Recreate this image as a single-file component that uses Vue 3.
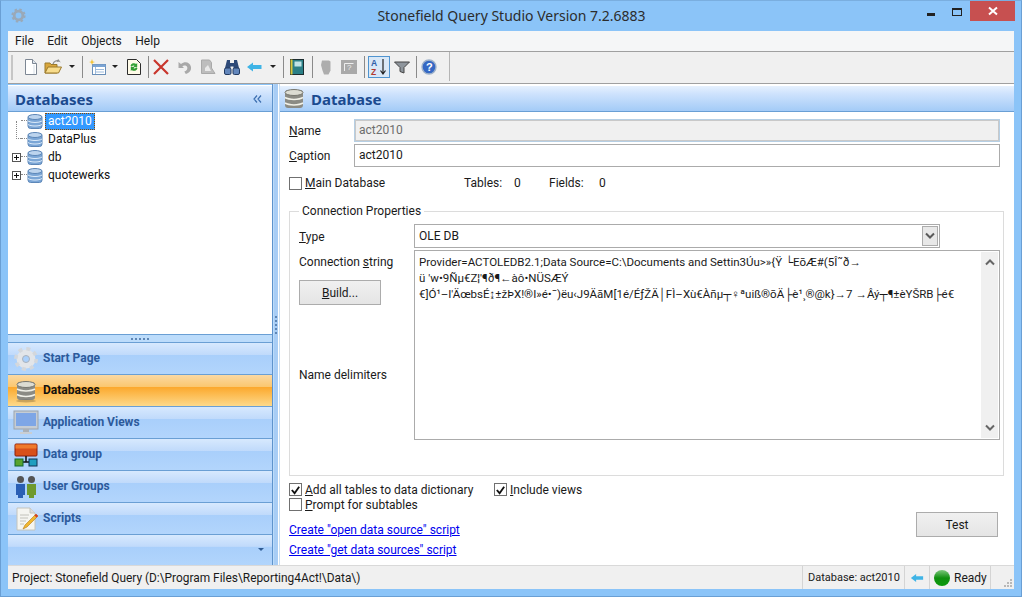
<template>
  <div class="window">
    <div class="titlebar">
      <svg class="app-icon" viewBox="0 0 16 16"><circle cx="8" cy="8" r="4.6" fill="none" stroke="#9aa9b8" stroke-width="3" /><circle cx="8" cy="8" r="6.6" fill="none" stroke="#9aa9b8" stroke-width="2" stroke-dasharray="2.6 2.6" /></svg>
      <span class="title">Stonefield Query Studio Version 7.2.6883</span>
      <div class="winbtns">
        <span class="min"></span>
        <span class="max"></span>
        <span class="close"><svg viewBox="0 0 10 10" width="10" height="10"><path d="M1 1.500l8 7M9 1.500l-8 7" stroke="#fff" stroke-width="2" /></svg></span>
      </div>
    </div>

    <div class="menubar">
      <span v-for="m in menus" :key="m">{{ m }}</span>
    </div>

    <div class="toolbar">
      <span class="grip"></span>
      <!-- new -->
      <svg class="tb ml-9" viewBox="0 0 16 16"><path d="M2.500 .5h7l4 4v11h-11z" fill="#fff" stroke="#7d8794" /><path d="M9.500 .5v4h4" fill="#dfe6ee" stroke="#7d8794" /><path d="M11 15V6" stroke="#d5dde6" /></svg>
      <!-- open -->
      <svg class="tb wide ml-5" viewBox="0 0 18 16"><path d="M1 4h5l1 1.500h6V14H1z" fill="#d9a63c" stroke="#9b7a2c" /><path d="M1 14l3-6h13.500l-3 6z" fill="#f8dc8c" stroke="#9b7a2c" /><path d="M9 5c1-3 4-4 6-3l-1-1.500M15 2l-2 .5" fill="none" stroke="#8c8c8c" stroke-width="1.200" /></svg>
      <span class="caret ml-7"></span>
      <span class="sep ml-7"></span>
      <!-- new view -->
      <svg class="tb wide ml-5" viewBox="0 0 18 16"><rect x="4.500" y="5.500" width="13" height="10" fill="#fff" stroke="#6a8fb8" /><rect x="4.500" y="5.500" width="13" height="2.500" fill="#7aa4d4" /><path d="M8 10.500h8M8 13h8M7.500 8v7" stroke="#9dbbdc" /><path d="M4 0l.8 2.400L7 3l-2.200.7L4 6l-.8-2.300L1 3l2.200-.6z" fill="#f2c230" /></svg>
      <span class="caret ml-6"></span>
      <!-- refresh doc -->
      <svg class="tb ml-8" viewBox="0 0 16 16"><path d="M1.500 .5h9l4 4v11h-13z" fill="#fffbe8" stroke="#2c2c2c" /><path d="M4.500 7a3.500 3.500 0 0 1 5.700-2l1-1v4H7.300l1.200-1.200A1.900 1.900 0 0 0 6 7.800z" fill="#36a336" /><path d="M11.500 9a3.500 3.500 0 0 1-5.700 2l-1 1V8h3.900L7.500 9.200a1.900 1.900 0 0 0 2.500-1z" fill="#2f9b2f" /></svg>
      <span class="sep ml-6"></span>
      <!-- delete -->
      <svg class="tb ml-4" viewBox="0 0 16 16"><path d="M1 1l14 14M15 1L1 15" stroke="#c8352c" stroke-width="2.200" /></svg>
      <!-- undo, disabled -->
      <svg class="tb ml-8" viewBox="0 0 16 16"><path d="M1.500 3v6h5.500L5.300 7.200C7 6 10 6.500 10.300 8.500c.3 2-1 3.500-3 4l1.500 2.500c4-1 6-4 5-7.700C13 3.500 8 1.500 4 5z" fill="#a9a9a9" /></svg>
      <!-- find text, disabled -->
      <svg class="tb ml-7" viewBox="0 0 16 16"><path d="M1.500 1h8l2 2.500V9l3.500 5.500H1.500z" fill="#bdbdbd" stroke="#a9a9a9" /><path d="M5 9l3-3 3 6H5z" fill="#e9e9e9" /></svg>
      <!-- binoculars -->
      <svg class="tb ml-8" viewBox="0 0 16 16"><path d="M3 1h3v3h4V1h3l2.500 10h-6V7.500h-3V11H.5z" fill="#2e4a78" /><rect x=".5" y="9" width="6.500" height="6.500" rx="1.500" fill="#6286bb" stroke="#223a60" /><rect x="9" y="9" width="6.500" height="6.500" rx="1.500" fill="#6286bb" stroke="#223a60" /></svg>
      <!-- back -->
      <svg class="tb ml-6" viewBox="0 0 16 16"><path d="M1 8l6-4.500V6h8.500v4H7v2.500z" fill="#3fb4e6" /></svg>
      <span class="caret ml-8"></span>
      <span class="sep ml-7"></span>
      <!-- save book -->
      <svg class="tb ml-5" viewBox="0 0 16 16"><rect x="1.500" y=".5" width="13" height="15" fill="#2a7f86" stroke="#1c2c30" /><rect x="1.500" y=".5" width="2" height="15" fill="#d8c83c" /><rect x="5.500" y="2.500" width="7" height="5" fill="#bfe3e6" /></svg>
      <span class="sep ml-7"></span>
      <!-- hand, disabled -->
      <svg class="tb ml-5" viewBox="0 0 16 16"><path d="M4 1.500h7l1.500 1v9l-2 4H6l-1.500-4L3 6z" fill="#adadad" /></svg>
      <!-- query, disabled -->
      <svg class="tb ml-7" viewBox="0 0 16 16"><rect x="0" y="1" width="16" height="14" fill="#a9a9a9" /><path d="M3.500 12V4.500h9" fill="none" stroke="#eee" /><text x="6" y="11" font-size="8" fill="#eee" font-family="Liberation Sans, sans-serif">?</text></svg>
      <span class="sep ml-7"></span>
      <!-- sort toggle -->
      <span class="toggled ml-3">
        <svg viewBox="0 0 18 18" width="18" height="18"><text x="1" y="8" font-size="8.500" font-weight="700" fill="#2f5fa8" font-family="Liberation Sans, sans-serif">A</text><text x="1" y="16.500" font-size="8.500" font-weight="700" fill="#b23a30" font-family="Liberation Sans, sans-serif">Z</text><path d="M13 1v14M10.500 12.500L13 16l2.500-3.500" fill="none" stroke="#222" stroke-width="1.200" /></svg>
      </span>
      <!-- filter -->
      <svg class="tb ml-4" viewBox="0 0 16 16"><path d="M.5 3h15L10 8.500V14l-4-1.500v-4z" fill="#8e959c" stroke="#444" /></svg>
      <span class="sep ml-6"></span>
      <!-- help -->
      <svg class="tb ml-4" viewBox="0 0 16 16"><circle cx="8" cy="8" r="7" fill="#3568c4" stroke="#9fb2c9" stroke-width="1.400" /><text x="5" y="12" font-size="11" font-weight="700" fill="#fff" font-family="Liberation Sans, sans-serif">?</text></svg>
      <span class="sep-end"></span>
    </div>

    <div class="main">
      <div class="left">
        <div class="panel-head">
          <span class="panel-title">Databases</span>
          <svg class="collapse" viewBox="0 0 9 8" width="9" height="8"><path d="M4 .5L1 4l3 3.500M8 .5L5 4l3 3.500" fill="none" stroke="#3d6fb0" stroke-width="1.200" /></svg>
        </div>
        <div class="tree">
          <div v-for="(t, i) in treeItems" :key="t.name" class="tree-row">
            <span class="expander" :class="{ hidden: !t.kids }"><i></i><b></b></span>
            <span class="dots" :class="{ first: i === 0 }"></span>
            <svg class="db-small" viewBox="0 0 16 16">
              <rect x="1" y="2" width="14" height="13" rx="2.500" fill="#7ba6d6" stroke="#5d87b8" />
              <ellipse cx="8" cy="3.500" rx="7" ry="2.500" fill="#bcd4ee" stroke="#5d87b8" />
              <path d="M1 7.500c3 2 11 2 14 0M1 11c3 2 11 2 14 0" fill="none" stroke="#dcebfa" />
            </svg>
            <span class="tree-label" :class="{ selected: i === 0 }">{{ t.name }}</span>
          </div>
        </div>
        <div class="hsplit"><span class="dotgrip"></span></div>
        <div
          v-for="n in navItems"
          :key="n.name"
          class="nav-item"
          :class="{ active: n.name === 'Databases' }"
        >
          <span class="nav-icon">
            <svg v-if="n.icon === 'gear'" viewBox="0 0 24 24" width="24" height="24"><circle cx="12" cy="12" r="6.500" fill="none" stroke="#e2e5e9" stroke-width="6" /><circle cx="12" cy="12" r="10.200" fill="none" stroke="#d3d7dc" stroke-width="3.600" stroke-dasharray="4 4.010" /><circle cx="12" cy="12" r="3.500" fill="none" stroke="#aab2bc" /></svg>
            <svg v-else-if="n.icon === 'db'" viewBox="0 0 24 24" width="24" height="24"><rect x="3" y="3" width="18" height="18" rx="3" fill="#8b8b84" /><ellipse cx="12" cy="5.500" rx="9" ry="3" fill="#dcdcd2" stroke="#77776f" /><path d="M3 10c4 2.500 14 2.500 18 0M3 15.500c4 2.500 14 2.500 18 0" fill="none" stroke="#f1f1e8" stroke-width="1.500" /><ellipse cx="12" cy="22" rx="10" ry="1.500" fill="#00000033" /></svg>
            <svg v-else-if="n.icon === 'monitor'" viewBox="0 0 26 26" width="26" height="26"><rect x="1" y="1" width="24" height="18" fill="#c5ccd4" stroke="#9aa3ad" /><rect x="3" y="3" width="20" height="13" fill="#7ea6e6" /><rect x="10" y="19" width="6" height="3" fill="#aab1b8" /><rect x="7" y="22" width="12" height="2" fill="#c9ced3" /></svg>
            <svg v-else-if="n.icon === 'group'" viewBox="0 0 24 24" width="24" height="24"><rect x="1" y="1" width="22" height="12" rx="1" fill="#d8501a" stroke="#8a1e0c" /><rect x="1.500" y="1.500" width="21" height="4" fill="#ef7a2c" /><path d="M12 13v6M9 19h6" stroke="#111" stroke-width="1.500" /><rect x="1" y="16" width="8" height="7" fill="#58a32f" stroke="#163" /><rect x="15" y="16" width="8" height="7" fill="#1f9fc0" stroke="#135" /></svg>
            <svg v-else-if="n.icon === 'users'" viewBox="0 0 24 24" width="24" height="24"><circle cx="6.500" cy="4.500" r="3.500" fill="#555" /><path d="M2 9h9v11H9v3H4v-3H2z" fill="#2a5fb5" /><circle cx="17.500" cy="4.500" r="3.500" fill="#555" /><path d="M13 9h9v11h-2v3h-5v-3h-2z" fill="#6f9a2e" /></svg>
            <svg v-else viewBox="0 0 24 24" width="24" height="24"><path d="M3 1h13l5 5v17H3z" fill="#f5f5f0" stroke="#c4c4bc" /><path d="M16 1v5h5" fill="#ddd" stroke="#c4c4bc" /><path d="M6 8h9M6 11h8M6 14h6M6 17h4" stroke="#c2c2bb" /><path d="M22 7l2 2-11 11-4 2 2-4z" fill="#f0b72f" stroke="#b77a15" stroke-width=".6" /><path d="M22 7l2 2-1.500 1.500-2-2z" fill="#d63b2c" /></svg>
          </span>
          <span class="nav-label">{{ n.name }}</span>
        </div>
        <div class="nav-foot"><span class="foot-caret"></span></div>
      </div>

      <div class="vsplit"><span class="vgrip"></span></div>

      <div class="right">
        <div class="panel-head">
          <svg class="head-db" viewBox="0 0 20 22" width="20" height="22"><rect x="1" y="2" width="18" height="18" rx="3" fill="#8b8b84" /><ellipse cx="10" cy="4.500" rx="9" ry="3" fill="#dcdcd2" stroke="#77776f" /><path d="M1 9.500c4 2.500 14 2.500 18 0M1 15c4 2.500 14 2.500 18 0" fill="none" stroke="#f1f1e8" stroke-width="1.500" /></svg>
          <span class="panel-title">Database</span>
        </div>

        <div class="form">
          <div class="field-row">
            <label><u>N</u>ame</label>
            <div class="input disabled">act2010</div>
          </div>
          <div class="field-row second">
            <label><u>C</u>aption</label>
            <div class="input">act2010</div>
          </div>

          <div class="main-row">
            <span class="check"></span>
            <span class="check-text main-text"><u>M</u>ain Database</span>
            <span class="count">Tables:</span><span class="num">0</span>
            <span class="count">Fields:</span><span class="num">0</span>
          </div>

          <fieldset class="group">
            <legend>Connection Properties</legend>
            <div class="group-body">
              <div class="labels">
                <div class="lbl-type"><u>T</u>ype</div>
                <div class="lbl-conn">Connection <u>s</u>tring</div>
                <div class="btn build"><span><u>B</u>uild...</span></div>
                <div class="lbl-delim">Name delimiters</div>
              </div>
              <div class="controls">
                <div class="select">
                  <span>OLE DB</span>
                  <span class="select-btn"><svg viewBox="0 0 10 8" width="10" height="8"><path d="M1 1.500l4 4 4-4" fill="none" stroke="#5a5a5a" stroke-width="2" /></svg></span>
                </div>
                <div class="textarea">
                  <div class="text">
                    <div>Provider=ACTOLEDB2.1;Data Source=C:\Documents and Settin3Úu&gt;»{Ÿ └EõÆ#(5Î˜ð→</div>
                    <div>ü 'w•9Ñµ€Z¦'¶ð¶←àô•NÜSÆÝ</div>
                    <div>€]Ó¹–I'ÄœbsÉ↨±žÞX!®I»é•¯)ëu‹J9ÄãM[1é/ÉƒŽÄ│FÌ–Xù€Àñµ┬♀ªuiß®õÄ├è¹¸®@k}→7 →Âý┬¶±èYŠRB├é€</div>
                  </div>
                  <div class="scroll">
                    <svg viewBox="0 0 10 8" width="10" height="8"><path d="M1 6.500l4-4 4 4" fill="none" stroke="#666" stroke-width="2" /></svg>
                    <svg viewBox="0 0 10 8" width="10" height="8"><path d="M1 1.500l4 4 4-4" fill="none" stroke="#666" stroke-width="2" /></svg>
                  </div>
                </div>
              </div>
            </div>
          </fieldset>

          <div class="bottom">
            <div class="options">
              <div class="opt-row">
                <span class="check"><svg viewBox="0 0 12 12" width="12" height="12"><path d="M2 6l3 3.500L10 2.500" fill="none" stroke="#111" stroke-width="2" /></svg></span>
                <span class="check-text add"><u>A</u>dd all tables to data dictionary</span>
                <span class="check"><svg viewBox="0 0 12 12" width="12" height="12"><path d="M2 6l3 3.500L10 2.500" fill="none" stroke="#111" stroke-width="2" /></svg></span>
                <span class="check-text"><u>I</u>nclude views</span>
              </div>
              <div class="opt-row">
                <span class="check"></span>
                <span class="check-text"><u>P</u>rompt for subtables</span>
              </div>
              <a class="link first">Create "open data source" script</a>
              <a class="link">Create "get data sources" script</a>
            </div>
            <div class="btn test"><span>Test</span></div>
          </div>
        </div>
      </div>
    </div>

    <div class="statusbar">
      <span class="st-project">Project: Stonefield Query (D:\Program Files\Reporting4Act!\Data\)</span>
      <span class="st-cell st-db">Database: act2010</span>
      <span class="st-cell st-arrow"><svg viewBox="0 0 16 16" width="14" height="14"><path d="M1 8l6-4.500V6h8v4H7v2.500z" fill="#3fb4e6" /></svg></span>
      <span class="st-cell st-ready"><span class="led"></span>Ready</span>
      <span class="st-grip"><svg viewBox="0 0 9 9" width="9" height="9"><path d="M6 0h2v2H6zM3 3h2v2H3zM6 3h2v2H6zM0 6h2v2H0zM3 6h2v2H3zM6 6h2v2H6z" fill="#b8b8b8" /></svg></span>
    </div>
  </div>
</template>

<script setup>
const menus = ['File', 'Edit', 'Objects', 'Help'];

const treeItems = [
  { name: 'act2010', kids: false },
  { name: 'DataPlus', kids: false },
  { name: 'db', kids: true },
  { name: 'quotewerks', kids: true },
];

const navItems = [
  { name: 'Start Page', icon: 'gear' },
  { name: 'Databases', icon: 'db' },
  { name: 'Application Views', icon: 'monitor' },
  { name: 'Data group', icon: 'group' },
  { name: 'User Groups', icon: 'users' },
  { name: 'Scripts', icon: 'script' },
];
</script>

<style>
html, body { margin: 0; padding: 0; overflow: hidden; }
</style>

<style scoped>
.window {
  width: 1022px;
  height: 597px;
  box-sizing: border-box;
  background: #8bc4f8;
  border: 1px solid #6a9fd4;
  border-top-color: #7aaedf;
  padding: 0 7px 7px;
  display: flex;
  flex-direction: column;
  font-family: Roboto, "Noto Sans", sans-serif;
  font-size: 12px;
  color: #1a1a1a;
}
.titlebar {
  height: 30px;
  flex: none;
  display: flex;
  align-items: flex-start;
}
.app-icon { width: 15px; height: 15px; margin: 7px 0 0 3px; flex: none; }
.title {
  flex: 1;
  text-align: center;
  font-family: "Noto Sans", sans-serif;
  font-size: 14px;
  line-height: 30px;
  color: #2c2c2c;
  padding-left: 70px;
}
.winbtns { display: flex; align-items: flex-start; flex: none; }
.min { width: 8px; height: 3px; background: #222; margin: 12px 17px 0 0; }
.max { width: 8px; height: 5px; border: 1px solid #222; border-top-width: 2px; margin: 7px 8px 0 0; }
.close {
  width: 45px;
  height: 20px;
  margin-right: -1px;
  background: #c75050;
  display: flex;
  align-items: center;
  justify-content: center;
}

.menubar {
  height: 21px;
  flex: none;
  box-sizing: border-box;
  background: #f5f6f7;
  display: flex;
  align-items: center;
  gap: 13.5px;
  padding-left: 7px;
  border-bottom: 1px solid #a0a0a0;
  line-height: 20px;
}
.toolbar {
  height: 32px;
  flex: none;
  box-sizing: border-box;
  background: #f0f0f0;
  border-bottom: 1px solid #a0a0a0;
  display: flex;
  align-items: center;
  padding: 0 0 2px 3px;
}
.grip { width: 1px; height: 25px; border-left: 2px solid #c6c6c6; margin-top: 2px; flex: none; }
.tb { width: 16px; height: 16px; flex: none; }
.tb.wide { width: 18px; }
.ml-3 { margin-left: 3px; }
.ml-4 { margin-left: 4px; }
.ml-5 { margin-left: 5px; }
.ml-6 { margin-left: 6px; }
.ml-7 { margin-left: 7px; }
.ml-8 { margin-left: 8px; }
.ml-9 { margin-left: 9px; }
.caret {
  width: 0;
  height: 0;
  border-left: 3px solid transparent;
  border-right: 3px solid transparent;
  border-top: 3px solid #222;
  flex: none;
}
.sep { width: 1px; height: 22px; background: #8a8a8a; flex: none; }
.sep-end { width: 1px; height: 100%; background: #b5b5b5; margin-left: 12px; flex: none; }
.toggled {
  width: 22px;
  height: 22px;
  box-sizing: border-box;
  border: 1px solid #4f94d0;
  background: #d9e8f7;
  display: flex;
  align-items: center;
  justify-content: center;
  flex: none;
}

.main { flex: 1; display: flex; min-height: 0; }
.left { width: 264px; flex: none; display: flex; flex-direction: column; }
.vsplit {
  width: 8px;
  flex: none;
  background: linear-gradient(90deg, #5e93cc 0 1px, #bcdcfa 1px 2px, #a8cdf5 2px 6px, #fff 6px 7px, #c9dff4 7px);
  display: flex;
  align-items: center;
  justify-content: center;
}
.vgrip { width: 2px; height: 18px; background: repeating-linear-gradient(#5e86b5 0 2px, transparent 2px 4px); }
.right { flex: 1; min-width: 0; background: #fff; display: flex; flex-direction: column; }
.panel-head {
  height: 27px;
  flex: none;
  box-sizing: border-box;
  margin-top: 1px;
  background: linear-gradient(#e6f1fe, #cfe3fd 30%, #a3cbf7);
  border-top: 1px solid #fff;
  border-bottom: 1px solid #6a9fd4;
  display: flex;
  align-items: center;
  padding-left: 7px;
}
.right .panel-head { padding-left: 4px; }
.panel-title { font-family: "Noto Sans", sans-serif; font-size: 15px; font-weight: 700; color: #1b4a8f; line-height: 20px; }
.collapse { margin-left: auto; margin-right: 10px; }
.head-db { margin-right: 7px; }

.tree { height: 222px; flex: none; background: #fff; }
.tree-row { height: 18px; display: flex; align-items: center; }
.expander {
  width: 9px;
  height: 9px;
  box-sizing: border-box;
  border: 1px solid #555;
  margin-left: 4px;
  flex: none;
  background: #fff;
  position: relative;
}
.expander i { position: absolute; left: 1px; top: 3px; width: 5px; height: 1px; background: #111; }
.expander b { position: absolute; left: 3px; top: 1px; width: 1px; height: 5px; background: #111; }
.expander.hidden { visibility: hidden; }
.dots { width: 6px; height: 1px; border-top: 1px dotted #888; flex: none; position: relative; }
.dots.first::before {
  content: '';
  position: absolute;
  left: -5px;
  top: 0;
  height: 18px;
  border-left: 1px dotted #888;
}
.dots.first::after {
  content: '';
  position: absolute;
  left: -5px;
  top: 17px;
  width: 5px;
  border-top: 1px dotted #888;
}
.db-small { width: 16px; height: 17px; flex: none; }
.tree-label { margin-left: 2px; padding: 0 3px; line-height: 17px; color: #111; }
.tree-label.selected { background: #3399ff; color: #fff; outline: 1px dotted #8a4a00; outline-offset: -1px; }

.hsplit {
  height: 8px;
  flex: none;
  box-sizing: border-box;
  background: #bcdcfb;
  border-top: 1px solid #6a9fd4;
  display: flex;
  align-items: center;
  justify-content: center;
}
.dotgrip { width: 18px; height: 2px; background: repeating-linear-gradient(90deg, #5e86b5 0 2px, transparent 2px 4px); }

.nav-item {
  height: 32px;
  flex: none;
  box-sizing: border-box;
  border-top: 1px solid #6a9fd4;
  background: linear-gradient(#d7e9fe, #c0dafb 38%, #a9cffb 40%, #b2d5fc);
  display: flex;
  align-items: center;
  color: #2c5a9b;
  font-weight: 700;
}
.nav-item.active {
  background: linear-gradient(#fbd9a3, #fbc76f 38%, #fca92e 40%, #fdd98a);
  color: #111;
}
.nav-icon { width: 35px; height: 26px; display: flex; align-items: center; justify-content: center; flex: none; }
.nav-label { padding-bottom: 2px; }
.nav-foot {
  flex: 1;
  border-top: 1px solid #6a9fd4;
  background: linear-gradient(#d7e9fe, #c0dafb 38%, #a9cffb 40%, #b2d5fc);
  display: flex;
  justify-content: flex-end;
  align-items: flex-end;
  padding: 0 8px 14px 0;
}
.foot-caret {
  width: 0;
  height: 0;
  border-left: 3px solid transparent;
  border-right: 3px solid transparent;
  border-top: 3px solid #2f5c95;
}

.form { flex: 1; padding: 7px 14px 0 9px; display: flex; flex-direction: column; }
.field-row { display: flex; align-items: center; height: 23px; flex: none; }
.field-row.second { margin-top: 2px; }
.field-row label { width: 65px; flex: none; }
.input {
  flex: 1;
  height: 100%;
  box-sizing: border-box;
  border: 1px solid #ababab;
  padding-left: 4px;
  line-height: 21px;
  background: #fff;
}
.input.disabled { background: #f0f0f0; color: #6d6d6d; border: 1px solid #b6cfe4; outline: 1px solid #c9c9c9; outline-offset: -2px; }
.main-row { display: flex; align-items: center; margin-top: 8px; height: 16px; flex: none; }
.check {
  width: 11px;
  height: 11px;
  border: 1px solid #707070;
  background: #fff;
  flex: none;
  display: inline-flex;
  align-items: center;
  justify-content: center;
}
.check-text { margin-left: 3px; white-space: nowrap; }
.main-text { width: 159px; flex: none; }
.count { width: 50px; flex: none; }
.main-row .num { width: 35px; flex: none; }

.group {
  margin: 13px -4px 0 0;
  padding: 0 9px;
  height: 272px;
  flex: none;
  box-sizing: border-box;
  border: 1px solid #dcdcdc;
  min-width: 0;
}
.group legend { padding: 0 3px; margin-left: 0; line-height: 14px; }
.group-body { display: flex; margin-top: 6px; }
.labels { width: 115px; flex: none; padding-top: 1px; }
.lbl-type { height: 24px; line-height: 24px; }
.lbl-conn { margin-top: 2px; line-height: 22px; }
.btn {
  box-sizing: border-box;
  width: 82px;
  height: 25px;
  border: 1px solid #acacac;
  background: linear-gradient(#f0f0f0, #e5e5e5);
  display: flex;
  align-items: center;
  justify-content: center;
  flex: none;
}
.build { margin-top: 7px; }
.lbl-delim { margin-top: 62px; line-height: 16px; }
.controls { flex: 1; display: flex; flex-direction: column; gap: 2px; }
.select {
  width: 526px;
  height: 24px;
  box-sizing: border-box;
  border: 1px solid #ababab;
  display: flex;
  align-items: center;
  justify-content: space-between;
  padding: 0 1px 0 4px;
}
.select-btn {
  width: 16px;
  height: 20px;
  box-sizing: border-box;
  border: 1px solid #acacac;
  background: #e8e8e8;
  display: flex;
  align-items: center;
  justify-content: center;
}
.textarea {
  height: 190px;
  width: 586px;
  box-sizing: border-box;
  border: 1px solid #ababab;
  display: flex;
}
.text { flex: 1; padding: 3px 0 0 4px; font-size: 11.5px; line-height: 16px; white-space: nowrap; overflow: hidden; min-width: 0; }
.scroll {
  width: 17px;
  margin: 1px;
  background: #f0f0f0;
  display: flex;
  flex-direction: column;
  align-items: center;
  justify-content: space-between;
  padding: 6px 0;
  box-sizing: border-box;
  flex: none;
}

.bottom { display: flex; justify-content: space-between; margin-top: 6px; }
.opt-row { display: flex; align-items: center; height: 15px; }
.add { width: 189px; flex: none; }
.link { display: block; color: #0000ee; text-decoration: underline; line-height: 16px; margin-top: 4px; }
.link.first { margin-top: 10px; }
.test { margin: 30px 2px 0 0; }

.statusbar {
  height: 24px;
  flex: none;
  box-sizing: border-box;
  background: #f0f0f0;
  border-top: 1px solid #d9d9d9;
  display: flex;
  align-items: center;
  padding-left: 4px;
}
.st-project { flex: 1; font-size: 11.9px; white-space: nowrap; }
.st-cell {
  height: 100%;
  display: flex;
  align-items: center;
  box-sizing: border-box;
  border-left: 1px solid #d4d4d4;
  white-space: nowrap;
  flex: none;
}
.st-db { width: 102px; padding-left: 5px; font-size: 11px; }
.st-arrow { width: 25px; justify-content: center; }
.st-ready { width: 62px; padding-left: 4px; border-right: 1px solid #d4d4d4; }
.led {
  width: 16px;
  height: 16px;
  border-radius: 50%;
  background: linear-gradient(#7cc77c, #0f8f0f 50%, #0a9a0a);
  margin-right: 4px;
  flex: none;
}
.st-grip {
  width: 23px;
  height: 100%;
  box-sizing: border-box;
  display: flex;
  align-items: flex-end;
  justify-content: flex-end;
  padding: 0 1px 1px 0;
  flex: none;
}
</style>
